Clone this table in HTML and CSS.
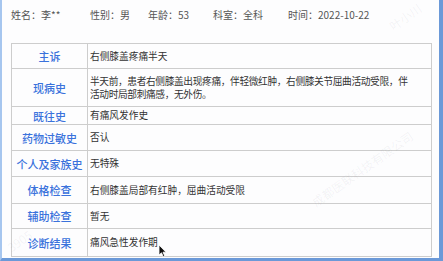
FILE: index.html
```html
<!DOCTYPE html>
<html lang="zh">
<head>
<meta charset="utf-8">
<link rel="stylesheet" href="styles.css">
</head>
<body>
<div class="frame">
  <div class="info">
    <span>姓名：李**</span>
    <span>性别：男</span>
    <span>年龄：53</span>
    <span>科室：全科</span>
    <span>时间：2022-10-22</span>
  </div>
  <div class="record">
    <div class="label r1">主诉</div><div class="value">右侧膝盖疼痛半天</div>
    <div class="label">现病史</div><div class="value multi"><span>半天前，患者右侧膝盖出现疼痛，伴轻微红肿，右侧膝关节屈曲活动受限，伴<br>活动时局部刺痛感，无外伤。</span></div>
    <div class="label">既往史</div><div class="value">有痛风发作史</div>
    <div class="label">药物过敏史</div><div class="value">否认</div>
    <div class="label">个人及家族史</div><div class="value">无特殊</div>
    <div class="label">体格检查</div><div class="value">右侧膝盖局部有红肿，屈曲活动受限</div>
    <div class="label">辅助检查</div><div class="value">暂无</div>
    <div class="label">诊断结果</div><div class="value">痛风急性发作期</div>
  </div>
  <div class="wm wm1">成都医联科技有限公司</div>
  <div class="wm wm2">叶小川</div>
  <div class="wm wm3">3905</div>
  <svg class="cursor" width="9" height="14" viewBox="0 0 9 14"><path d="M1 1 L1 11 L3.5 8.8 L5.3 12.8 L6.8 12.1 L5 8.2 L8 8.2 Z" fill="#111" stroke="#fff" stroke-width="0.8"/></svg>
</div>
</body>
</html>
```
FILE: styles.css
```css
html, body {
  margin: 0;
  padding: 0;
  background: #fdfdfe;
}
.frame {
  position: relative;
  width: 443px;
  height: 261px;
  box-sizing: border-box;
  border-left: 2px solid #a6c6ef;
  border-right: 4px solid #6b99d8;
  border-bottom: 3px solid #6b99d8;
  overflow: hidden;
  font-family: "Noto Sans CJK SC", "Noto Sans", sans-serif;
}
.info {
  display: grid;
  grid-template-columns: 79px 58px 65px 75px auto;
  padding: 8px 0 0 9px;
  height: 43px;
  box-sizing: border-box;
  font-size: 10px;
  line-height: 14px;
  color: #555;
}
.record {
  margin-left: 9px;
  width: 421px;
  display: grid;
  grid-template-columns: 76px 1fr;
  grid-template-rows: 25px 38px 18px 26px 26px 27px 25px 28px;
  border-top: 1px solid #cdcdcd;
  border-left: 1px solid #cdcdcd;
  box-sizing: border-box;
}
.label, .value {
  border-right: 1px solid #cdcdcd;
  border-bottom: 1px solid #cdcdcd;
  display: flex;
  align-items: center;
  box-sizing: border-box;
  min-width: 0;
}
.label {
  justify-content: center;
  font-size: 11px;
  font-weight: 500;
  color: #3a72dc;
}
.value {
  font-size: 9.7px;
  color: #333;
  padding: 0 0 0 2px;
  line-height: 13px;
}
.value.multi span {
  white-space: nowrap;
  letter-spacing: -0.35px;
}
.wm {
  position: absolute;
  font-size: 12px;
  color: rgba(120, 120, 140, 0.08);
  transform: rotate(-35deg);
  white-space: nowrap;
  pointer-events: none;
}
.wm1 { left: 300px; top: 160px; }
.wm2 { left: 385px; top: 8px; }
.wm3 { left: 4px; top: 232px; }
.cursor {
  position: absolute;
  left: 156px;
  top: 244px;
}
```
